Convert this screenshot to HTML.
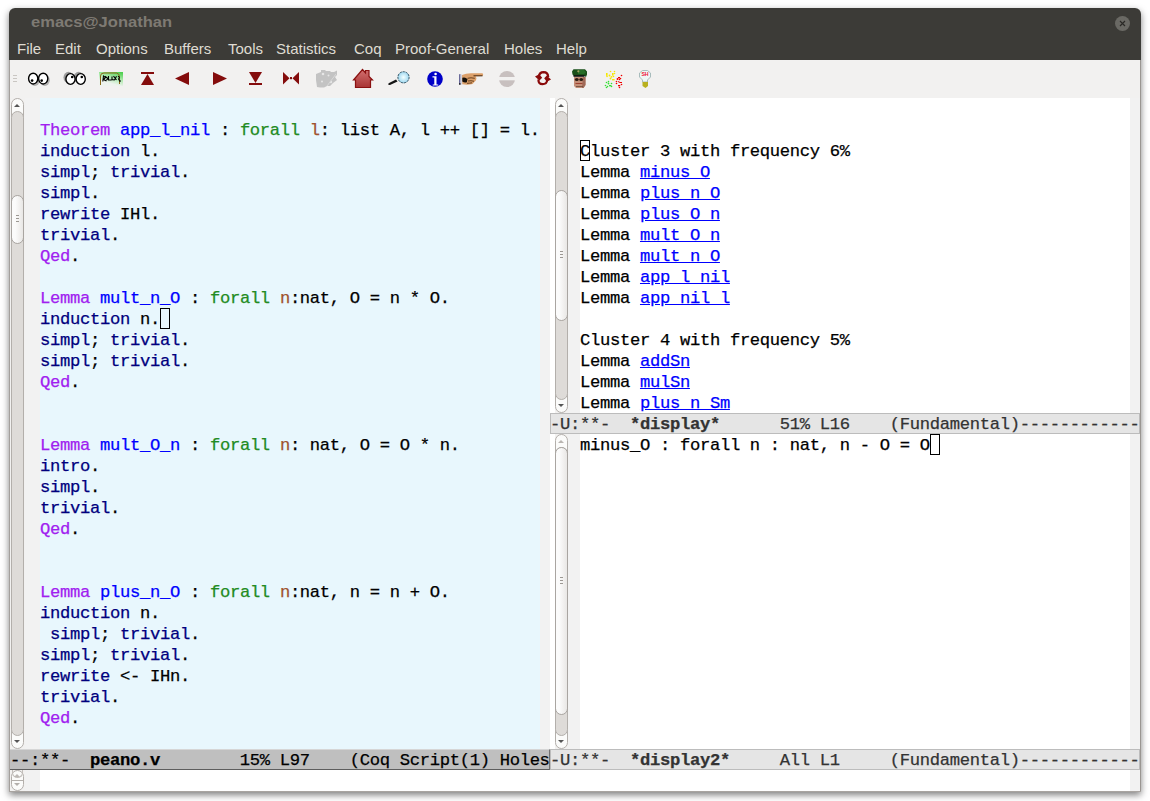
<!DOCTYPE html>
<html><head><meta charset="utf-8">
<style>
html,body{margin:0;padding:0}
body{width:1150px;height:801px;background:#fff;position:relative;overflow:hidden;font-family:"Liberation Mono",monospace}
div{position:absolute;box-sizing:border-box}
.ln{white-space:pre;-webkit-text-stroke:0.25px currentColor;letter-spacing:-0.3217px;font-size:17.2px;line-height:21px;height:21px;color:#000}
.k{color:#a020f0}.f{color:#0000ff}.t{color:#228b22}.v{color:#a0522d}.m{color:#00007e}
.a{color:#0000ff;text-decoration:underline;text-underline-offset:1px}
.b{font-weight:bold}
.sb{width:13px;border:1px solid #b3afab;border-radius:7px;background:#fbfbfa}
.tr{width:13px;border:1px solid #b3afab;border-radius:7px;background:#dedbd8}
.th{width:13px;border:1px solid #a9a5a1;border-radius:7px;background:linear-gradient(90deg,#fbfbfb 30%,#e9e7e5)}
.grip{width:3px;height:8px;background:repeating-linear-gradient(180deg,#9c9893 0 1px,transparent 1px 3px)}
.au{width:0;height:0;border-left:3.5px solid transparent;border-right:3.5px solid transparent;border-bottom:3.5px solid #5c5c5c}
.ad{width:0;height:0;border-left:3.5px solid transparent;border-right:3.5px solid transparent;border-top:3.5px solid #5c5c5c}
.menu{font-family:"Liberation Sans",sans-serif;font-size:15px;color:#dfdbd2;top:40px;line-height:18px;white-space:pre}
</style></head><body>
<div style="left:9px;top:8px;width:1132px;height:784px;border-radius:6px 6px 0 0;background:#f2f1f0;box-shadow:0 3px 7px 0px rgba(0,0,0,0.5)"></div>
<div style="left:9px;top:8px;width:1132px;height:52px;border-radius:6px 6px 0 0;background:#3c3b37"></div>
<div style="left:9px;top:60px;width:1px;height:732px;background:#a4a09c"></div>
<div style="left:1140px;top:60px;width:1px;height:732px;background:#9a9692"></div>
<div style="left:9px;top:791px;width:1132px;height:1px;background:#a8a4a0"></div>
<div style="left:31px;top:13px;font-family:'Liberation Sans',sans-serif;font-weight:bold;font-size:14.5px;line-height:18px;color:#7e7a73;white-space:pre;transform-origin:0 0;transform:scaleX(1.14)">emacs@Jonathan</div>
<div style="left:1115px;top:16px;width:15px;height:15px;border-radius:50%;background:#6a6964"></div>
<svg style="position:absolute;left:1115px;top:16px" width="15" height="15"><path d="M5 5L10 10M10 5L5 10" stroke="#2a2926" stroke-width="1.15"/></svg>
<div class="menu" style="left:17px">File</div>
<div class="menu" style="left:55px">Edit</div>
<div class="menu" style="left:96px">Options</div>
<div class="menu" style="left:164px">Buffers</div>
<div class="menu" style="left:228px">Tools</div>
<div class="menu" style="left:276px">Statistics</div>
<div class="menu" style="left:354px">Coq</div>
<div class="menu" style="left:395px">Proof-General</div>
<div class="menu" style="left:504px">Holes</div>
<div class="menu" style="left:556px">Help</div>
<svg style="position:absolute;left:0;top:0" width="700" height="96" viewBox="0 0 700 96">
<defs>
<linearGradient id="gr" x1="0" y1="0" x2="0" y2="1"><stop offset="0" stop-color="#d27070"/><stop offset="1" stop-color="#a83434"/></linearGradient>
<radialGradient id="lens" cx="0.5" cy="0.5" r="0.5"><stop offset="0" stop-color="#f4ffff"/><stop offset="1" stop-color="#9fd8f0"/></radialGradient>
<linearGradient id="gg" x1="0.8" y1="0" x2="0.35" y2="1"><stop offset="0" stop-color="#50d050"/><stop offset="0.4" stop-color="#a8e8a8"/><stop offset="0.8" stop-color="#eef3ee"/></linearGradient>
</defs>
<!-- handle -->
<g fill="#c9c6c2"><rect x="13" y="75" width="4" height="1"/><rect x="13" y="78" width="4" height="1"/><rect x="13" y="81" width="4" height="1"/></g>
<!-- eyes 1 -->
<g>
<ellipse cx="34.8" cy="80.2" rx="5" ry="5.8" fill="#888" opacity="0.6"/>
<ellipse cx="44.8" cy="80.2" rx="5" ry="5.8" fill="#888" opacity="0.6"/>
<ellipse cx="33.2" cy="78.6" rx="4.6" ry="5.4" fill="#fff" stroke="#000" stroke-width="1.4"/>
<ellipse cx="43.2" cy="78.6" rx="4.6" ry="5.4" fill="#fff" stroke="#000" stroke-width="1.4"/>
<circle cx="32.1" cy="80.6" r="1.3"/><circle cx="41.7" cy="80.6" r="1.3"/>
</g>
<!-- eyes 2 -->
<g>
<ellipse cx="68.5" cy="77.5" rx="5" ry="5.8" fill="#777" opacity="0.7"/>
<ellipse cx="78.7" cy="77.5" rx="5" ry="5.8" fill="#777" opacity="0.7"/>
<ellipse cx="70.5" cy="79" rx="4.6" ry="5.4" fill="#fff" stroke="#000" stroke-width="1.4"/>
<ellipse cx="80.7" cy="79" rx="4.6" ry="5.4" fill="#fff" stroke="#000" stroke-width="1.4"/>
<circle cx="72.2" cy="77" r="1.3"/><circle cx="81.8" cy="77" r="1.3"/>
</g>
<!-- green text icon -->
<rect x="99" y="72" width="24" height="14" fill="url(#gg)"/>
<path d="M100.5 85 V76 Q100.5 73 104 73 H116.5 Q119.5 73.5 119.5 77 V84" fill="none" stroke="#8a6a18" stroke-width="1"/>
<path d="M102.8 81.5 L103.5 76 L105.5 77.5 L103.5 79.5 L106.5 81 M105 76.2 L108 78.5 L106.5 80 M108.5 76 V80 H111.5 M112 76.5 V79.5 L114.5 80 M113.5 76.2 L116.5 80 M116.5 76.2 L114.5 80 M118 76.3 Q120 77 119 78.5 Q118 79.5 120 80.5 V82" fill="none" stroke="#000" stroke-width="1.1"/>
<!-- up to top -->
<g fill="#840c0c">
<rect x="141" y="72" width="13" height="2"/><path d="M147.5 74 L154 85 L141 85 Z"/>
<path d="M189 72 V85 L175 78.5 Z"/>
<path d="M213 72 V85 L227 78.5 Z"/>
<path d="M249 72 H262 L255.5 83 Z"/><rect x="249" y="83" width="13" height="2"/>
<path d="M283 72 V84.5 L289.5 78.2 Z"/><path d="M299 72 V84.5 L292.5 78.2 Z"/><rect x="290" y="77" width="2" height="2.2"/>
</g>
<!-- grey blob -->
<path d="M316 74 L321 72 V70 H325 L326 71 H330 L331 72 H334 L337 70.5 V75 L335 77 L337 80 L333 83 L330 86 H327 L324 87.5 H320 L317 87 L316 80 Z" fill="#c3c3c3"/>
<g fill="#e6e6e6"><circle cx="323" cy="74" r="1.3"/><circle cx="328.5" cy="75.5" r="1"/><circle cx="322" cy="81.5" r="1"/><circle cx="331" cy="82" r="1.2"/></g>
<path d="M327 86 L336 74" stroke="#d8d8d8" stroke-width="1"/>
<!-- house -->
<path d="M353.5 80 L362.5 69.5 L365.5 73 V70.5 H369 V76.5 L372.5 80 H370.5 V87.5 H355.5 V80 Z" fill="url(#gr)" stroke="#8a1111" stroke-width="1.2" stroke-linejoin="miter"/>
<!-- magnifier -->
<path d="M388 84.3 Q388.5 83 390 82.5 L396 79.5 L397.5 81.5 L390.5 84.8 Q389 85.3 388 84.3 Z" fill="#151515"/>
<circle cx="403.5" cy="77.3" r="5.6" fill="url(#lens)" stroke="#2a4a5a" stroke-width="1" stroke-dasharray="2.2 0.9"/>
<!-- info -->
<circle cx="435" cy="79" r="7.8" fill="#0000c8"/>
<g fill="#fff"><circle cx="435.6" cy="74" r="1.3"/><path d="M432.5 76.2 H436.5 V84.4 H438.2 V85.6 H432.7 V84.4 H434.3 V77.4 H432.5 Z"/></g>
<!-- hand -->
<rect x="459" y="74.2" width="1.6" height="10.3" fill="#6a6a9a"/>
<rect x="460.6" y="74.5" width="1.6" height="10" fill="#d2d2dc"/>
<rect x="459" y="83.3" width="1.6" height="1.3" fill="#111"/>
<path d="M462 75 Q466 73 472 73.2 L482.5 73.3 Q484 74.5 482.5 76 L475.5 76.3 Q477.2 78 476 80.2 L472.5 84 Q468 85.2 462.3 84.3 Z" fill="#dca06a"/>
<path d="M462.3 77.8 Q465.5 76.8 467.5 79.2 L466.8 82.2 Q464.5 83.2 462.3 81.5 Z" fill="#161008"/>
<path d="M473.5 75.8 H482.5" stroke="#4a2a10" stroke-width="1"/>
<path d="M467.5 78.3 Q471 77.3 474.8 78.3 M468 81 Q471 80.3 474 81.3 M467 83.3 Q470 83.2 472 82.8" fill="none" stroke="#5a3515" stroke-width="0.9"/>
<!-- stop -->
<circle cx="507" cy="79" r="8" fill="#c8c0bf"/>
<rect x="498" y="77" width="18" height="3.3" fill="#f2f1f0"/>
<!-- refresh -->
<g fill="none" stroke="#8a0a0a" stroke-width="2.2">
<path d="M538.8 76.5 Q539.5 72.3 543.5 72.2 Q548 72.2 548.2 77"/>
<path d="M547.2 80 Q546.8 84.2 542.5 84.2 Q538.3 84.2 538.4 79.5"/>
</g>
<g fill="#8a0a0a"><path d="M535 76.5 L539.2 74.2 L542.2 77.8 L539.4 80.6 Z"/><path d="M551 79.5 L546.8 81.8 L544.2 78.3 L546.8 75.5 Z"/></g>
<!-- soldier -->
<path d="M574 86 V77 H585.5 V85 L583.5 88 H576 Z" fill="#c48f78"/>
<path d="M583 77 H585.5 V85 L583.5 88 H582 Z" fill="#a06a58"/>
<ellipse cx="576.8" cy="79.6" rx="1.9" ry="1.5" fill="#2a1a10"/><ellipse cx="581.2" cy="79.6" rx="1.9" ry="1.5" fill="#2a1a10"/>
<path d="M575.5 83.5 H582.5" stroke="#9a3a2a" stroke-width="0.9"/>
<path d="M576 86.5 H583" stroke="#6a4a3a" stroke-width="0.8"/>
<path d="M572 71.5 L573.5 69.3 H585 L587 71.5 V74.5 L586 77 L584.5 76 H574 L572.5 74.5 Z" fill="#1a501a"/>
<path d="M578 70 H584 L586 72.5 L584 74 H578 Z" fill="#2e7a2e" opacity="0.7"/>
<rect x="573.5" y="75.2" width="11" height="1.6" fill="#111"/>
<circle cx="578.3" cy="71.3" r="1.1" fill="#a0a060"/>
<!-- confetti -->
<g fill="#f5e800"><rect x="606" y="73" width="1.6" height="2.8"/><circle cx="607" cy="76.5" r="0.8"/><circle cx="610.5" cy="71.5" r="0.8"/><circle cx="614.5" cy="71.5" r="0.8"/><rect x="612" y="73" width="1.6" height="2.6"/><circle cx="614.5" cy="73.5" r="0.8"/><circle cx="609.5" cy="75.5" r="0.9"/><circle cx="611.5" cy="76.8" r="0.9"/><circle cx="613.5" cy="76.5" r="0.8"/><circle cx="610.5" cy="78.5" r="0.9"/><rect x="612" y="79" width="2.6" height="1.4"/></g>
<g fill="#33e033"><circle cx="608.5" cy="81.5" r="0.8"/><circle cx="606.5" cy="82.5" r="0.8"/><circle cx="608.5" cy="83.5" r="0.9"/><circle cx="611.5" cy="83.5" r="0.8"/><circle cx="605.5" cy="85.5" r="0.8"/><rect x="609" y="85" width="2.4" height="1.3"/><circle cx="607.5" cy="86.5" r="0.8"/><circle cx="611.5" cy="86.5" r="0.8"/><circle cx="606.5" cy="87.5" r="0.8"/></g>
<g fill="#f00000"><circle cx="621.5" cy="75.5" r="0.8"/><rect x="618" y="77" width="2" height="1.3"/><circle cx="617.5" cy="79" r="0.9"/><circle cx="620.5" cy="78.5" r="0.8"/><circle cx="619.5" cy="79.5" r="0.8"/><circle cx="616.5" cy="81.5" r="0.8"/><path d="M618 81 L620 82 H622 V83 H620 L618 82 Z"/><circle cx="616.5" cy="83.5" r="0.8"/><circle cx="621.5" cy="84.5" r="0.8"/><rect x="618" y="85" width="2.2" height="1.3"/><circle cx="619.5" cy="87.5" r="0.8"/></g>
<!-- bulb -->
<path d="M642.5 70.5 H647.5 L650.5 73 V77 L647.5 80 V82 H642.5 V80 L639.5 77 V73 Z" fill="#eef6f6" stroke="#9fb5b5" stroke-width="0.9"/>
<path d="M642.5 82 H648 V86 L645.5 88 L642.5 86 Z" fill="#b8b020"/>
<text x="645" y="76.3" font-family="Liberation Sans" font-weight="bold" font-size="5.2" fill="#ee1133" text-anchor="middle">SH</text>
</svg>
<div style="left:40px;top:98px;width:500px;height:651px;background:#e8f7fd"></div>
<div style="left:550px;top:98px;width:5px;height:651px;background:#fff"></div>
<div style="left:580px;top:98px;width:550px;height:651px;background:#fff"></div>
<div style="left:40px;top:770px;width:1090px;height:21px;background:#fff"></div>
<div style="left:25px;top:98px;width:15px;height:651px;background:#f2f2f2"></div>
<div style="left:540px;top:98px;width:10px;height:651px;background:#f2f2f2"></div>
<div style="left:568px;top:98px;width:12px;height:651px;background:#f2f2f2"></div>
<div style="left:1130px;top:98px;width:10px;height:651px;background:#f2f2f2"></div>
<div style="left:25px;top:770px;width:15px;height:21px;background:#f2f2f2"></div><div style="left:1130px;top:770px;width:10px;height:21px;background:#f2f2f2"></div>
<div class="sb" style="left:11px;top:98px;height:651px"></div><div class="tr" style="left:11px;top:111px;height:625px"></div><div class="th" style="left:11px;top:195px;height:49px"></div><div class="grip" style="left:16px;top:215px"></div><div class="au" style="left:14px;top:104px;border-bottom-color:#555"></div><div class="ad" style="left:14px;top:740px;border-top-color:#555"></div>
<div class="sb" style="left:555px;top:98px;height:315px"></div><div class="tr" style="left:555px;top:111px;height:289px"></div><div class="th" style="left:555px;top:190px;height:131px"></div><div class="grip" style="left:560px;top:251px"></div><div class="au" style="left:558px;top:104px;border-bottom-color:#555"></div><div class="ad" style="left:558px;top:404px;border-top-color:#555"></div>
<div class="sb" style="left:555px;top:434px;height:315px"></div><div class="tr" style="left:555px;top:447px;height:289px"></div><div class="th" style="left:555px;top:447px;height:268px"></div><div class="grip" style="left:560px;top:577px"></div><div class="au" style="left:558px;top:440px;border-bottom-color:#b9b5b1"></div><div class="ad" style="left:558px;top:740px;border-top-color:#555"></div>
<div class="sb" style="left:11px;top:770px;height:21px"></div><div style="left:11px;top:780px;width:13px;height:1px;background:#b3afab"></div><div style="left:12px;top:769px;width:11px;height:9px;border:1px solid #c3bfbb;border-top:none;border-radius:0 0 5.5px 5.5px"></div><div class="au" style="left:14px;top:774px;border-bottom-color:#bdb9b5"></div><div class="ad" style="left:14px;top:783px;border-top-color:#b3afab"></div>
<div class="ln" style="left:40px;top:120px"><span class="k">Theorem</span> <span class="f">app_l_nil</span> : <span class="t">forall</span> <span class="v">l</span>: list A, l ++ [] = l.</div>
<div class="ln" style="left:40px;top:141px"><span class="m">induction</span> l.</div>
<div class="ln" style="left:40px;top:162px"><span class="m">simpl</span>; <span class="m">trivial</span>.</div>
<div class="ln" style="left:40px;top:183px"><span class="m">simpl</span>.</div>
<div class="ln" style="left:40px;top:204px"><span class="m">rewrite</span> IHl.</div>
<div class="ln" style="left:40px;top:225px"><span class="m">trivial</span>.</div>
<div class="ln" style="left:40px;top:246px"><span class="k">Qed</span>.</div>
<div class="ln" style="left:40px;top:288px"><span class="k">Lemma</span> <span class="f">mult_n_O</span> : <span class="t">forall</span> <span class="v">n</span>:nat, O = n * O.</div>
<div class="ln" style="left:40px;top:309px"><span class="m">induction</span> n.</div>
<div class="ln" style="left:40px;top:330px"><span class="m">simpl</span>; <span class="m">trivial</span>.</div>
<div class="ln" style="left:40px;top:351px"><span class="m">simpl</span>; <span class="m">trivial</span>.</div>
<div class="ln" style="left:40px;top:372px"><span class="k">Qed</span>.</div>
<div class="ln" style="left:40px;top:435px"><span class="k">Lemma</span> <span class="f">mult_O_n</span> : <span class="t">forall</span> <span class="v">n</span>: nat, O = O * n.</div>
<div class="ln" style="left:40px;top:456px"><span class="m">intro</span>.</div>
<div class="ln" style="left:40px;top:477px"><span class="m">simpl</span>.</div>
<div class="ln" style="left:40px;top:498px"><span class="m">trivial</span>.</div>
<div class="ln" style="left:40px;top:519px"><span class="k">Qed</span>.</div>
<div class="ln" style="left:40px;top:582px"><span class="k">Lemma</span> <span class="f">plus_n_O</span> : <span class="t">forall</span> <span class="v">n</span>:nat, n = n + O.</div>
<div class="ln" style="left:40px;top:603px"><span class="m">induction</span> n.</div>
<div class="ln" style="left:40px;top:624px"> <span class="m">simpl</span>; <span class="m">trivial</span>.</div>
<div class="ln" style="left:40px;top:645px"><span class="m">simpl</span>; <span class="m">trivial</span>.</div>
<div class="ln" style="left:40px;top:666px"><span class="m">rewrite</span> &lt;- IHn.</div>
<div class="ln" style="left:40px;top:687px"><span class="m">trivial</span>.</div>
<div class="ln" style="left:40px;top:708px"><span class="k">Qed</span>.</div>
<div class="ln" style="left:580px;top:141px">Cluster 3 with frequency 6%</div>
<div class="ln" style="left:580px;top:162px">Lemma <span class="a">minus_O</span></div>
<div class="ln" style="left:580px;top:183px">Lemma <span class="a">plus_n_O</span></div>
<div class="ln" style="left:580px;top:204px">Lemma <span class="a">plus_O_n</span></div>
<div class="ln" style="left:580px;top:225px">Lemma <span class="a">mult_O_n</span></div>
<div class="ln" style="left:580px;top:246px">Lemma <span class="a">mult_n_O</span></div>
<div class="ln" style="left:580px;top:267px">Lemma <span class="a">app_l_nil</span></div>
<div class="ln" style="left:580px;top:288px">Lemma <span class="a">app_nil_l</span></div>
<div class="ln" style="left:580px;top:330px">Cluster 4 with frequency 5%</div>
<div class="ln" style="left:580px;top:351px">Lemma <span class="a">addSn</span></div>
<div class="ln" style="left:580px;top:372px">Lemma <span class="a">mulSn</span></div>
<div class="ln" style="left:580px;top:393px">Lemma <span class="a">plus_n_Sm</span></div>
<div class="ln" style="left:580px;top:435px">minus_O : forall n : nat, n - O = O</div>
<div style="left:160px;top:308px;width:10px;height:21px;border:1px solid #000"></div>
<div style="left:580px;top:140px;width:10px;height:21px;border:1px solid #000"></div>
<div style="left:930px;top:434px;width:10px;height:21px;border:1px solid #000"></div>
<div style="left:10px;top:749px;width:540px;height:21px;background:#bfbfbf;border-top:1px solid #d6d6d6;border-bottom:1px solid #5e5e5e;border-right:1px solid #707070;overflow:hidden"></div>
<div class="ln" style="left:10px;top:750px">--:**-  <span class="b">peano.v</span>        15% L97    (Coq Script(1) Holes</div>
<div style="left:550px;top:413px;width:590px;height:21px;background:#e5e5e5;border:1px solid #bcbcbc"></div>
<div class="ln" style="left:550px;top:414px;width:590px;overflow:hidden;color:#333">-U:**-  <span class="b">*display*</span>      51% L16    (Fundamental)-------------</div>
<div style="left:550px;top:749px;width:590px;height:21px;background:#e5e5e5;border:1px solid #bcbcbc"></div>
<div class="ln" style="left:550px;top:750px;width:590px;overflow:hidden;color:#333">-U:**-  <span class="b">*display2*</span>     All L1     (Fundamental)-------------</div>
</body></html>
